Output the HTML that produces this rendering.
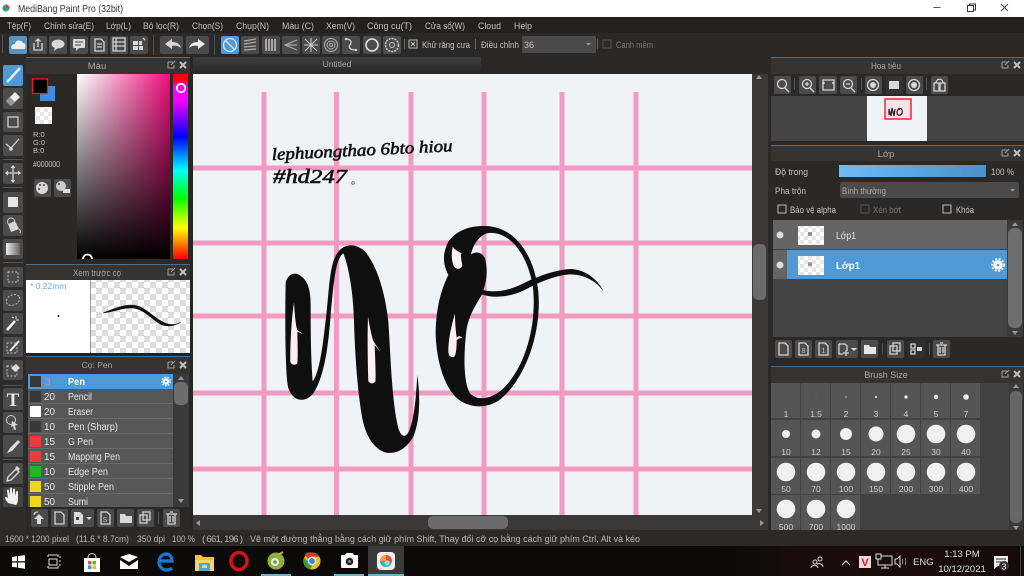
<!DOCTYPE html>
<html><head><meta charset="utf-8"><title>MediBang Paint Pro</title>
<style>
html,body{margin:0;padding:0;width:1024px;height:576px;overflow:hidden;background:#222}
svg{display:block;filter:blur(.35px)}
text{font-family:"Liberation Sans","DejaVu Sans",sans-serif;font-size:9.5px;fill:#c2c2c2}
.b{fill:#4b4b4b}
.i{fill:none;stroke:#d4d4d4;stroke-width:1.3}
.f{fill:#d8d8d8}
.c{text-anchor:middle}
.h{fill:#a8a8a8}
.n{font-size:8.5px;fill:#cfcfcf;text-anchor:middle}
.l{font-size:10px;fill:#e6e6e6}
</style></head><body>
<svg width="1024" height="576" viewBox="0 0 1024 576" xmlns="http://www.w3.org/2000/svg">
<defs>
<linearGradient id="hg" x1="0" x2="1" y1="0" y2="0"><stop offset="0" stop-color="#fff"/><stop offset="1" stop-color="#ee0f7c"/></linearGradient>
<linearGradient id="vg" x1="0" x2="0" y1="0" y2="1"><stop offset="0" stop-color="#000" stop-opacity="0"/><stop offset="1" stop-color="#000"/></linearGradient>
<linearGradient id="hue" x1="0" x2="0" y1="0" y2="1"><stop offset="0" stop-color="#f00"/><stop offset=".03" stop-color="#f00"/><stop offset=".07" stop-color="#f0f"/><stop offset=".15" stop-color="#e0f"/><stop offset=".34" stop-color="#00f"/><stop offset=".52" stop-color="#0ff"/><stop offset=".67" stop-color="#0f0"/><stop offset=".83" stop-color="#ff0"/><stop offset="1" stop-color="#f00"/></linearGradient>
<linearGradient id="op" x1="0" x2="1" y1="0" y2="0"><stop offset="0" stop-color="#6fbcf5"/><stop offset="1" stop-color="#4a90c6"/></linearGradient>
<linearGradient id="tab" x1="0" x2="0" y1="0" y2="1"><stop offset="0" stop-color="#3e3e3e"/><stop offset="1" stop-color="#2a2a2a"/></linearGradient>
<linearGradient id="gr" x1="0" x2="1" y1="0" y2="0"><stop offset="0" stop-color="#eee"/><stop offset="1" stop-color="#666"/></linearGradient>
<linearGradient id="tb" x1="0" x2="1" y1="0" y2="0"><stop offset="0" stop-color="#0b0a09"/><stop offset=".7" stop-color="#0c0a09"/><stop offset=".8" stop-color="#1d0c0c"/><stop offset="1" stop-color="#150b0b"/></linearGradient>
<pattern id="ck" width="8" height="8" patternUnits="userSpaceOnUse"><rect width="8" height="8" fill="#fff"/><rect width="4" height="4" fill="#e6e6e6"/><rect x="4" y="4" width="4" height="4" fill="#e6e6e6"/></pattern>
<pattern id="ck2" width="12" height="12" patternUnits="userSpaceOnUse"><rect width="12" height="12" fill="#fff"/><rect width="6" height="6" fill="#ddd"/><rect x="6" y="6" width="6" height="6" fill="#ddd"/></pattern>
</defs>

<!-- base -->
<rect width="1024" height="576" fill="#262626"/>
<rect width="1024" height="17" fill="#fff"/>
<!-- title bar -->
<circle cx="6" cy="8" r="3.5" fill="#3aa36f"/><path d="M6 4.5a3.5 3.5 0 0 1 3.5 3.5H6z" fill="#e34"/><path d="M2.5 8A3.5 3.5 0 0 0 6 11.500V8z" fill="#38c"/>
<text x="18" y="12" style="font-size:10.500px;fill:#333" textLength="105" lengthAdjust="spacingAndGlyphs">MediBang Paint Pro (32bit)</text>
<path d="M933.500 7.500h7" stroke="#555" stroke-width="1"/>
<path d="M967.500 5.500h6v6h-6zM969.500 5.500v-1.500h6v6h-2" fill="none" stroke="#333" stroke-width="1"/>
<path d="M1001 4l7 7M1008 4l-7 7" stroke="#444" stroke-width="1"/>

<!-- menu bar -->
<rect y="17" width="1024" height="16" fill="#232120"/>
<g>
<text x="7" y="29" textLength="24" lengthAdjust="spacingAndGlyphs">Tệp(F)</text>
<text x="44" y="29" textLength="50" lengthAdjust="spacingAndGlyphs">Chỉnh sửa(E)</text>
<text x="106" y="29" textLength="25" lengthAdjust="spacingAndGlyphs">Lớp(L)</text>
<text x="143" y="29" textLength="36" lengthAdjust="spacingAndGlyphs">Bộ lọc(R)</text>
<text x="192" y="29" textLength="31" lengthAdjust="spacingAndGlyphs">Chọn(S)</text>
<text x="236" y="29" textLength="33" lengthAdjust="spacingAndGlyphs">Chụp(N)</text>
<text x="282" y="29" textLength="32" lengthAdjust="spacingAndGlyphs">Màu (C)</text>
<text x="326" y="29" textLength="29" lengthAdjust="spacingAndGlyphs">Xem(V)</text>
<text x="367" y="29" textLength="45" lengthAdjust="spacingAndGlyphs">Công cụ(T)</text>
<text x="425" y="29" textLength="40" lengthAdjust="spacingAndGlyphs">Cửa sổ(W)</text>
<text x="478" y="29" textLength="23" lengthAdjust="spacingAndGlyphs">Cloud</text>
<text x="514" y="29" textLength="18" lengthAdjust="spacingAndGlyphs">Help</text>
</g>

<!-- tool bar -->
<rect y="33" width="1024" height="22" fill="#2a2928"/>
<rect x="2" y="35" width="1" height="18" fill="#555"/>
<rect x="153" y="35" width="1" height="20" fill="#3c5566"/>
<rect x="214" y="35" width="1" height="20" fill="#3c5566"/>
<g>
<rect x="9" y="36" width="18" height="18" rx="2" fill="#5a93bf"/><path d="M12 49c-2-3 1-5 3-5 0-4 6-5 8-1 2 0 3 2 2 6z" fill="#eee"/>
<rect x="29" y="36" width="18" height="18" rx="2" class="b"/><path d="M34 43v7h8v-7M38 47v-8m-2.500 2.500l2.500-2.500 2.500 2.500" class="i"/>
<rect x="49" y="36" width="18" height="18" rx="2" class="b"/><ellipse cx="58" cy="44" rx="6.500" ry="4.500" class="f"/><path d="M55 47l-1 4 4-3z" class="f"/>
<rect x="70" y="36" width="18" height="18" rx="2" class="b"/><rect x="73" y="39" width="12" height="9" rx="1" class="f"/><path d="M76 48v3l3-3z" class="f"/><path d="M75 42h8M75 45h6" stroke="#4b4b4b"/>
<rect x="90" y="36" width="18" height="18" rx="2" class="b"/><path d="M95 39h6l3 3v9h-9zM97 44h5M97 47h5" class="i"/>
<rect x="110" y="36" width="18" height="18" rx="2" class="b"/><path d="M113 38h12v13h-12zM113 42h12M113 46h12M116 38v13" class="i"/>
<rect x="130" y="36" width="18" height="18" rx="2" class="b"/><path d="M133 41h5v4h-5zM139 41h3v4h-3zM133 46h5v4h-5zM139 46h4v4h-4z" class="f"/><path d="M143 38l2 2" class="i"/>
<rect x="160" y="36" width="23" height="18" rx="2" class="b"/><path d="M165 44l7-5v3c5 0 8 2 9 6-3-2-5-3-9-2v3z" class="f"/>
<rect x="186" y="36" width="23" height="18" rx="2" class="b"/><path d="M205 44l-7-5v3c-5 0-8 2-9 6 3-2 5-3 9-2v3z" fill="#eee"/>
<rect x="221" y="36" width="18" height="18" rx="2" fill="#4f9ad6"/><circle cx="230" cy="45" r="6.500" fill="none" stroke="#d7e9f6" stroke-width="1.300"/><path d="M225.500 40.500l9 9" stroke="#d7e9f6" stroke-width="1.300"/>
<rect x="241" y="36" width="18" height="18" rx="2" class="b"/><path d="M244 41l12-2M244 44l12-2M244 47l12-1M244 50l12-1" stroke="#aaa" stroke-width="1.200"/>
<rect x="262" y="36" width="18" height="18" rx="2" class="b"/><path d="M266 39v12M269 39v12M272 39v12M275 39v12" stroke="#ccc" stroke-width="1.400"/>
<rect x="282" y="36" width="18" height="18" rx="2" class="b"/><path d="M297 40l-12 5 12 5M297 45h-12" stroke="#aaa" stroke-width="1.200" fill="none"/>
<rect x="302" y="36" width="18" height="18" rx="2" class="b"/><path d="M305 39l12 12M317 39l-12 12M311 38v14M304 45h14" stroke="#ccc"/>
<rect x="322" y="36" width="18" height="18" rx="2" class="b"/><circle cx="331" cy="45" r="6.500" fill="none" stroke="#aaa"/><circle cx="331" cy="45" r="4" fill="none" stroke="#aaa"/><circle cx="331" cy="45" r="1.500" fill="none" stroke="#aaa"/>
<rect x="342" y="36" width="18" height="18" rx="2" class="b"/><path d="M346 39c5 0 6 3 4 6s1 5 6 5" class="i"/><circle cx="346" cy="39" r="1.200" class="f"/><circle cx="356" cy="50" r="1.200" class="f"/>
<rect x="363" y="36" width="18" height="18" rx="2" class="b"/><circle cx="372" cy="45" r="6" fill="none" stroke="#e0e0e0" stroke-width="1.600"/>
<rect x="383" y="36" width="18" height="18" rx="2" class="b"/><circle cx="392" cy="45" r="6.500" fill="none" stroke="#ccc" stroke-dasharray="2 1" stroke-width="1.500"/><circle cx="392" cy="45" r="2.500" fill="none" stroke="#ccc"/>
</g>
<rect x="404" y="39" width="1" height="10" fill="#666"/>
<rect x="409" y="40" width="8" height="8" fill="none" stroke="#bbb"/><path d="M411 42l4 4M415 42l-4 4" stroke="#ccc"/>
<text x="422" y="48" textLength="48" lengthAdjust="spacingAndGlyphs">Khử răng cưa</text>
<rect x="475" y="39" width="1" height="10" fill="#666"/>
<text x="481" y="48" textLength="38" lengthAdjust="spacingAndGlyphs">Điều chỉnh</text>
<rect x="522" y="36" width="74" height="17" rx="1" fill="#4a4a4a"/>
<text x="524" y="48" style="font-size:9px">36</text>
<path d="M586 43h5l-2.500 2.500z" fill="#999"/>
<rect x="597" y="39" width="1" height="10" fill="#666"/>
<rect x="603" y="40" width="8" height="8" fill="none" stroke="#555"/>
<text x="616" y="48" style="fill:#777" textLength="37" lengthAdjust="spacingAndGlyphs">Canh mềm</text>

<!-- tab row -->
<rect x="193" y="55" width="578" height="19" fill="#2a2928"/>
<rect x="193" y="57" width="288" height="14" rx="1" fill="url(#tab)"/>
<text x="337" y="67" class="c h" style="font-size:8.500px">Untitled</text>

<!-- left toolbar -->
<rect x="0" y="55" width="26" height="475" fill="#2d2c2b"/>
<g>
<rect x="3" y="65" width="20" height="21" rx="2" fill="#4f9ad6"/><path d="M7 82l3-3 10-11" stroke="#eee" stroke-width="2.500" fill="none"/>
<rect x="3" y="88" width="20" height="21" rx="2" class="b"/><path d="M6 101l9-9 5 5-9 9z" fill="#eee"/><path d="M6 101l4-4 5 5-4 4z" fill="#999"/>
<rect x="3" y="112" width="20" height="20" rx="2" class="b"/><rect x="8" y="117" width="10" height="10" fill="none" stroke="#ccc" stroke-width="1.300"/>
<rect x="3" y="135" width="20" height="21" rx="2" class="b"/><path d="M6 144l5 4 8-9" class="i" stroke-width="2"/><circle cx="11" cy="149" r="1.800" class="f"/>
<rect x="3" y="159" width="20" height="1" fill="#555"/>
<rect x="3" y="163" width="20" height="21" rx="2" class="b"/><path d="M13 166v15M6 173h14" class="i"/><path d="M13 165l-2.500 3h5zM13 183l-2.500-3h5zM5 173l3-2.500v5zM21 173l-3-2.500v5z" class="f"/>
<rect x="3" y="187" width="20" height="1" fill="#555"/>
<rect x="3" y="192" width="20" height="21" rx="2" class="b"/><rect x="8" y="197" width="10" height="10" fill="#e8e8e8"/>
<rect x="3" y="215" width="20" height="21" rx="2" class="b"/><path d="M8 224l7-3 4 8-8 3z" class="f"/><path d="M8 224c-1-3 0-6 3-6s3 2 4 3" fill="none" stroke="#ccc"/><path d="M19 229c1 1 2 2 1 4" stroke="#ccc" fill="none"/>
<rect x="3" y="239" width="20" height="20" rx="2" class="b"/><rect x="6" y="243" width="14" height="12" fill="url(#gr)"/>
<rect x="3" y="262" width="20" height="1" fill="#555"/>
<rect x="3" y="267" width="20" height="20" rx="2" class="b"/><rect x="8" y="272" width="10" height="10" fill="none" stroke="#bbb" stroke-dasharray="2 1.500"/>
<rect x="3" y="290" width="20" height="21" rx="2" class="b"/><ellipse cx="13" cy="300" rx="7" ry="5" transform="rotate(-25 13 300)" fill="none" stroke="#bbb" stroke-dasharray="2 1.500"/>
<rect x="3" y="313" width="20" height="21" rx="2" class="b"/><path d="M7 330l8-9" stroke="#eee" stroke-width="2.500"/><path d="M16 316v3M19 320h-3M14 318l-2-1" stroke="#ddd"/>
<rect x="3" y="337" width="20" height="20" rx="2" class="b"/><rect x="7" y="343" width="10" height="10" fill="none" stroke="#bbb" stroke-dasharray="2 1.500"/><path d="M10 351l9-10" stroke="#eee" stroke-width="2"/>
<rect x="3" y="360" width="20" height="20" rx="2" class="b"/><rect x="7" y="366" width="10" height="10" fill="none" stroke="#bbb" stroke-dasharray="2 1.500"/><path d="M11 368l5-4 4 4-5 4z" fill="#ddd"/>
<rect x="3" y="385" width="20" height="1" fill="#555"/>
<rect x="3" y="388" width="20" height="22" rx="2" class="b"/><text x="13" y="406" class="c" style="font-family:'Liberation Serif',serif;font-size:19px;font-weight:bold;fill:#e8e8e8">T</text>
<rect x="3" y="412" width="20" height="21" rx="2" class="b"/><circle cx="11" cy="420" r="4.500" fill="none" stroke="#ccc"/><path d="M12 421l6 4-3 .5 1 4-2 .5-1-4-2 1z" class="f"/>
<rect x="3" y="435" width="20" height="22" rx="2" class="b"/><path d="M7 453l3-5 8-8 2 2-8 9z" fill="#ddd"/>
<rect x="3" y="459" width="20" height="1" fill="#555"/>
<rect x="3" y="463" width="20" height="21" rx="2" class="b"/><path d="M7 481l1-4 8-8 3 3-8 8z" fill="none" stroke="#ddd" stroke-width="1.300"/><path d="M15 468l2-2 3 3-2 2z" class="f"/>
<rect x="3" y="487" width="20" height="20" rx="2" fill="#444"/><path d="M8 503c-2-3-4-5-3-6s3 1 3 1l-1-7c0-2 2-2 2 0l1 4 0-6c0-2 2-2 2 0v6l1-5c0-2 2-2 2 0v6l1-4c1-2 2-1 2 0v7c0 3-1 5-2 6z" fill="#f0f0f0"/>
</g>

<!-- colour panel -->
<rect x="26" y="57" width="164" height="17" fill="#353433"/>
<rect x="26" y="57" width="164" height="1" fill="#4a6f8c"/>
<rect x="26" y="74" width="164" height="190" fill="#2a2928"/>
<text x="97" y="69" class="c h">Màu</text>
<path d="M168 62h5M168 62v6h6v-3M171 65l4-4" fill="none" stroke="#a0a0a0"/>
<path d="M180 62l6 6M186 62l-6 6" stroke="#c0c0c0" stroke-width="2"/>
<rect x="77" y="74" width="93" height="185" fill="url(#hg)"/>
<rect x="77" y="74" width="93" height="185" fill="url(#vg)"/>
<rect x="173" y="74" width="15" height="185" fill="url(#hue)"/>
<circle cx="181" cy="88" r="4.200" fill="none" stroke="#fff" stroke-width="1.800"/>
<path d="M83 259a4.500 4.500 0 0 1 9 0" fill="none" stroke="#fff" stroke-width="1.800"/>
<rect x="40" y="86" width="15" height="15" fill="#3d8ee0"/>
<rect x="32.500" y="79" width="15" height="14.500" fill="#000" stroke="#e02020" stroke-width="1.300"/>
<rect x="35" y="107" width="17" height="17" fill="url(#ck)"/>
<text x="33" y="137" style="font-size:7.500px">R:0</text>
<text x="33" y="145" style="font-size:7.500px">G:0</text>
<text x="33" y="153" style="font-size:7.500px">B:0</text>
<text x="33" y="167" style="font-size:8px" textLength="27" lengthAdjust="spacingAndGlyphs">#000000</text>
<rect x="34" y="179" width="17" height="18" rx="2" class="b"/><circle cx="42" cy="188" r="6" class="f"/><circle cx="40" cy="185" r="1" fill="#444"/><circle cx="44" cy="185" r="1" fill="#444"/><circle cx="39" cy="189" r="1" fill="#444"/>
<rect x="54" y="179" width="17" height="18" rx="2" class="b"/><circle cx="61" cy="186" r="5" fill="#ccc"/><circle cx="59" cy="184" r="1" fill="#444"/><rect x="63" y="189" width="7" height="4" fill="#ddd"/>

<!-- brush preview panel -->
<rect x="26" y="264" width="164" height="16" fill="#353433"/>
<rect x="26" y="264" width="164" height="1" fill="#4a6f8c"/>
<text x="73" y="276" class="h" textLength="48" lengthAdjust="spacingAndGlyphs">Xem trước cọ</text>
<path d="M168 269h5M168 269v6h6v-3M171 272l4-4" fill="none" stroke="#a0a0a0"/>
<path d="M180 269l6 6M186 269l-6 6" stroke="#c0c0c0" stroke-width="2"/>
<rect x="26" y="280" width="64" height="73" fill="#fff"/>
<rect x="90" y="280" width="1" height="73" fill="#999"/>
<rect x="91" y="280" width="99" height="73" fill="url(#ck2)"/>
<rect x="26" y="353" width="164" height="4" fill="#222"/>
<text x="30" y="289" style="font-size:8.500px;fill:#6fa8d8">* 0.22mm</text>
<circle cx="58.500" cy="316" r="1" fill="#222"/>
<path d="M103 313c10-4 20-8 28-8 12 0 20 10 30 16 8 5 16 4 20 1-4 3-13 6-21 2-10-6-17-16-29-16-9 0-18 4-28 5z" fill="#111" stroke="#111" stroke-width=".5"/>

<!-- brush panel -->
<rect x="26" y="357" width="164" height="173" fill="#2a2928"/>
<rect x="26" y="357" width="164" height="17" fill="#353433"/>
<rect x="26" y="356" width="164" height="1" fill="#4a6f8c"/>
<text x="97" y="368" class="c h" style="font-size:8.500px">Cọ: Pen</text>
<path d="M168 362h5M168 362v6h6v-3M171 365l4-4" fill="none" stroke="#a0a0a0"/>
<path d="M180 362l6 6M186 362l-6 6" stroke="#c0c0c0" stroke-width="2"/>
<rect x="28" y="374" width="145" height="133" fill="#575757"/>
<rect x="28" y="374" width="145" height="15" fill="#4f9ad6"/>
<g fill="#6a6a6a"><rect x="28" y="403" width="145" height="1"/><rect x="28" y="418" width="145" height="1"/><rect x="28" y="433" width="145" height="1"/><rect x="28" y="448" width="145" height="1"/><rect x="28" y="463" width="145" height="1"/><rect x="28" y="478" width="145" height="1"/><rect x="28" y="493" width="145" height="1"/></g>
<rect x="30" y="376" width="11" height="11" fill="#383838"/>
<rect x="30" y="391" width="11" height="11" fill="#383838"/>
<rect x="30" y="406" width="11" height="11" fill="#fff"/>
<rect x="30" y="421" width="11" height="11" fill="#383838"/>
<rect x="30" y="436" width="11" height="11" fill="#ee3a3a"/>
<rect x="30" y="451" width="11" height="11" fill="#ee3a3a"/>
<rect x="30" y="466" width="11" height="11" fill="#1cb81c"/>
<rect x="30" y="481" width="11" height="11" fill="#ecd81e"/>
<rect x="30" y="496" width="11" height="11" fill="#ecd81e"/>
<text x="45" y="385" style="fill:#f27a9a;font-size:10px">3</text>
<text x="68" y="385" style="fill:#fff;font-size:10px;font-weight:bold" textLength="17" lengthAdjust="spacingAndGlyphs">Pen</text>
<text x="44" y="400" class="l" textLength="11" lengthAdjust="spacingAndGlyphs">20</text><text x="68" y="400" class="l" textLength="24" lengthAdjust="spacingAndGlyphs">Pencil</text>
<text x="44" y="415" class="l" textLength="11" lengthAdjust="spacingAndGlyphs">20</text><text x="68" y="415" class="l" textLength="25" lengthAdjust="spacingAndGlyphs">Eraser</text>
<text x="44" y="430" class="l" textLength="11" lengthAdjust="spacingAndGlyphs">10</text><text x="68" y="430" class="l" textLength="50" lengthAdjust="spacingAndGlyphs">Pen (Sharp)</text>
<text x="44" y="445" class="l" textLength="11" lengthAdjust="spacingAndGlyphs">15</text><text x="68" y="445" class="l" textLength="25" lengthAdjust="spacingAndGlyphs">G Pen</text>
<text x="44" y="460" class="l" textLength="11" lengthAdjust="spacingAndGlyphs">15</text><text x="68" y="460" class="l" textLength="52" lengthAdjust="spacingAndGlyphs">Mapping Pen</text>
<text x="44" y="475" class="l" textLength="11" lengthAdjust="spacingAndGlyphs">10</text><text x="68" y="475" class="l" textLength="40" lengthAdjust="spacingAndGlyphs">Edge Pen</text>
<text x="44" y="490" class="l" textLength="11" lengthAdjust="spacingAndGlyphs">50</text><text x="68" y="490" class="l" textLength="46" lengthAdjust="spacingAndGlyphs">Stipple Pen</text>
<text x="44" y="505" class="l" textLength="11" lengthAdjust="spacingAndGlyphs">50</text><text x="68" y="505" class="l" textLength="20" lengthAdjust="spacingAndGlyphs">Sumi</text>
<circle cx="166" cy="381.500" r="3.200" fill="#fff"/><circle cx="166" cy="381.500" r="4.200" fill="none" stroke="#fff" stroke-dasharray="1.500 1.500" stroke-width="1.400"/><circle cx="166" cy="381.500" r="1" fill="#4f9ad6"/>
<rect x="173" y="374" width="16" height="133" fill="#3a3a3a"/>
<rect x="174" y="382" width="14" height="23" rx="5" fill="#6d6d6d"/>
<path d="M178 380l3-4 3 4zM178 499l3 4 3-4z" fill="#999"/>
<rect x="26" y="507" width="164" height="23" fill="#2a2928"/>
<g>
<rect x="31" y="509" width="17" height="18" rx="2" class="b"/><path d="M39 514l-5 5h3v5h4v-5h3z" class="f"/><path d="M34 515c0-3 3-3 4-3" class="i"/>
<rect x="51" y="509" width="17" height="18" rx="2" class="b"/><path d="M55 512h6l3 3v9h-9z" class="i"/>
<rect x="71" y="509" width="23" height="18" rx="2" class="b"/><path d="M74 512h6l3 3v9h-9z" fill="#ddd"/><rect x="76" y="517" width="3" height="3" fill="#444"/><path d="M86 517h6l-3 3z" fill="#ddd"/>
<rect x="97" y="509" width="17" height="18" rx="2" class="b"/><path d="M101 512h6l3 3v9h-9z" class="i"/><text x="105" y="522" class="c" style="font-size:7px">S</text>
<rect x="117" y="509" width="17" height="18" rx="2" class="b"/><path d="M120 514h5l1 2h6v7h-12z" class="f"/>
<rect x="137" y="509" width="17" height="18" rx="2" class="b"/><path d="M143 512h7v8h-7zM140 515h7v8h-7z" class="i"/>
<rect x="158" y="512" width="1" height="12" fill="#555"/>
<rect x="163" y="509" width="17" height="18" rx="2" class="b"/><path d="M166 514h11M168 514v10h7v-10M170 512h3M170 516v6M173 516v6" class="i"/>
</g>

<!-- canvas -->
<rect x="193" y="74" width="559" height="441" fill="#eff3f5"/>
<g fill="#f29ac0">
<rect x="261.500" y="92" width="5" height="423"/>
<rect x="334" y="92" width="5" height="423"/>
<rect x="408.500" y="92" width="5" height="423"/>
<rect x="481.500" y="92" width="5" height="423"/>
<rect x="559.500" y="92" width="5" height="423"/>
<rect x="633.500" y="92" width="5" height="423"/>
<rect x="193" y="165.500" width="559" height="5"/>
<rect x="193" y="240.500" width="559" height="5"/>
<rect x="193" y="313.500" width="559" height="5"/>
<rect x="193" y="390.500" width="559" height="5"/>
<rect x="193" y="466.500" width="559" height="5"/>
</g>
<!-- handwriting -->
<g transform="rotate(-2.800 272 160)">
<text x="272" y="160" style="font-family:'Liberation Serif',serif;font-style:italic;font-size:17px;fill:#111;stroke:#111;stroke-width:.6" textLength="181" lengthAdjust="spacingAndGlyphs">lephuongthao 6bto hiou</text>
</g>
<text x="273" y="183" style="font-family:'Liberation Serif',serif;font-style:italic;font-size:20px;fill:#111;stroke:#111;stroke-width:.6" textLength="74" lengthAdjust="spacingAndGlyphs">#hd247</text>
<circle cx="353" cy="183" r="1.300" fill="none" stroke="#666" stroke-width=".8"/>
<!-- big drawing -->
<g transform="translate(270 215) scale(.33333)">
<path fill="#0f0f0f" d="M47 205C50 180 75 165 95 185C115 200 122 230 122 270C122 340 122 420 128 500C150 470 160 380 170 290C178 210 180 140 205 110C225 85 260 85 285 110C320 150 345 230 355 320C362 420 365 560 385 640C395 670 410 670 420 640C435 600 438 540 442 480C450 540 452 610 430 665C410 700 380 720 345 712C310 700 285 660 275 600C262 520 255 420 252 320C250 230 235 150 220 115C195 130 190 220 182 300C175 390 165 480 130 535C105 565 70 560 55 520C45 480 45 300 47 205Z"/>
<path fill="#fdf0f4" d="M72 262C75 310 78 335 82 345L100 358L82 350C83 390 84 430 82 445C75 452 64 450 61 440C60 380 66 300 72 262Z"/>
<path fill="#fdf0f4" d="M294 305C300 340 305 365 310 378L332 412L314 390C316 440 318 490 316 500C310 508 298 506 295 498C293 440 292 360 294 305Z"/>
<path fill="#0f0f0f" fill-rule="evenodd" d="M640 33C720 30 790 100 805 230C815 350 770 480 700 545C670 575 620 585 575 560C530 535 500 450 497 360C497 290 510 230 535 180C520 150 515 120 535 80C560 45 600 33 640 33ZM650 55C630 62 610 85 603 118C620 108 635 112 645 130C655 170 650 200 635 240C615 275 600 295 590 340C580 420 580 500 600 535C630 565 680 545 710 510C780 430 800 300 788 210C765 90 700 45 650 55Z"/>
<path fill="#0f0f0f" d="M640 225C680 235 720 225 760 205C810 180 860 165 900 162C945 162 985 195 1000 228C975 195 940 178 900 178C860 180 810 200 770 222C720 248 670 250 635 238Z"/>
<path fill="#fdf0f4" d="M548 95C555 105 565 110 575 115C570 118 575 140 577 150C575 165 555 165 550 150C543 130 545 110 548 95Z"/>
<path fill="#fdf0f4" d="M555 295C555 330 558 350 560 368C565 362 572 362 578 370C570 368 563 372 560 376C560 400 558 420 552 426C540 428 535 420 535 410C535 370 545 330 555 295Z"/>
</g>
<!-- canvas scrollbars -->
<rect x="752" y="74" width="16" height="441" fill="#3a3938"/>
<rect x="753" y="244" width="13" height="56" rx="5" fill="#6b6b6b"/>
<path d="M756 79l3-4 3 4zM756 509l3 4 3-4z" fill="#999"/>
<rect x="193" y="515" width="575" height="15" fill="#3a3938"/>
<rect x="428" y="516" width="80" height="13" rx="5" fill="#6b6b6b"/>
<path d="M200 520l-4 3 4 3zM760 520l4 3-4 3z" fill="#999"/>
<rect x="768" y="55" width="3" height="475" fill="#2a2928"/>
<rect x="190" y="55" width="3" height="475" fill="#262625"/>

<!-- right: navigator -->
<rect x="771" y="57" width="253" height="88" fill="#2a2928"/>
<rect x="771" y="57" width="253" height="17" fill="#353433"/>
<rect x="771" y="57" width="253" height="1" fill="#4a6f8c"/>
<text x="871" y="69" class="h" textLength="30" lengthAdjust="spacingAndGlyphs">Hoa tiêu</text>
<path d="M1002 62h5M1002 62v6h6v-3M1005 65l4-4" fill="none" stroke="#a0a0a0"/>
<path d="M1014 62l6 6M1020 62l-6 6" stroke="#c0c0c0" stroke-width="2"/>
<g>
<rect x="774" y="76" width="17" height="18" rx="2" class="b"/><circle cx="782" cy="84" r="4.500" class="i"/><path d="M785 88l4 4" class="i"/>
<rect x="799" y="76" width="17" height="18" rx="2" class="b"/><circle cx="807" cy="84" r="4.500" class="i"/><path d="M810 88l4 4M805 84h4M807 82v4" class="i"/>
<rect x="819" y="76" width="18" height="18" rx="2" class="b"/><path d="M823 80h11v10h-11zM824 82v2M833 82v2" class="i"/>
<rect x="840" y="76" width="17" height="18" rx="2" class="b"/><circle cx="848" cy="84" r="4.500" class="i"/><path d="M851 88l4 4M846 84h4" class="i"/>
<rect x="865" y="76" width="17" height="18" rx="2" class="b"/><circle cx="873" cy="85" r="5.500" class="i"/><circle cx="873" cy="85" r="3" class="f"/>
<rect x="886" y="76" width="17" height="18" rx="2" fill="#333"/><rect x="889" y="81" width="10" height="8" class="f"/>
<rect x="906" y="76" width="17" height="18" rx="2" class="b"/><circle cx="914" cy="85" r="5.500" class="i"/><circle cx="914" cy="85" r="3" class="f"/>
<rect x="931" y="76" width="17" height="18" rx="2" class="b"/><path d="M934 83h5v8h-5zM940 83h5v8h-5zM936 83c0-5 7-5 7 0" class="i"/>
<rect x="794" y="78" width="1" height="12" fill="#555"/><rect x="861" y="78" width="1" height="12" fill="#555"/><rect x="926" y="78" width="1" height="12" fill="#555"/>
</g>
<rect x="771" y="96" width="253" height="45" fill="#444"/>
<rect x="867" y="96" width="60" height="45" fill="#f0f3f5"/>
<rect x="885" y="99" width="26" height="20" fill="#f6e0ea" stroke="#e01010" stroke-width="1.300"/>
<path d="M889 115v-6l2 7 1-8 2 8 1-7M898 109c3-2 5 1 4 4s-5 3-5 0 1-4 3-4" fill="none" stroke="#222" stroke-width="1.200"/>

<!-- right: layers -->
<rect x="771" y="145" width="253" height="220" fill="#2a2928"/>
<rect x="771" y="145" width="253" height="16" fill="#353433"/>
<rect x="771" y="145" width="253" height="1" fill="#4a6f8c"/>
<text x="886" y="157" class="c h">Lớp</text>
<path d="M1002 150h5M1002 150v6h6v-3M1005 153l4-4" fill="none" stroke="#a0a0a0"/>
<path d="M1014 150l6 6M1020 150l-6 6" stroke="#c0c0c0" stroke-width="2"/>
<text x="775" y="175" textLength="33" lengthAdjust="spacingAndGlyphs">Độ trong</text>
<rect x="839" y="165" width="147" height="12" fill="url(#op)"/>
<text x="991" y="175" textLength="23" lengthAdjust="spacingAndGlyphs">100 %</text>
<text x="775" y="194" textLength="31" lengthAdjust="spacingAndGlyphs">Pha trộn</text>
<rect x="840" y="182" width="179" height="16" rx="2" fill="#4a4a4a"/>
<text x="842" y="194" style="fill:#aaa" textLength="44" lengthAdjust="spacingAndGlyphs">Bình thường</text>
<path d="M1010 189h5l-2.500 2.500z" fill="#999"/>
<rect x="778" y="205" width="8" height="8" fill="none" stroke="#bbb"/>
<text x="790" y="213" textLength="46" lengthAdjust="spacingAndGlyphs">Bảo vệ alpha</text>
<rect x="861" y="205" width="8" height="8" fill="none" stroke="#555"/>
<text x="873" y="213" style="fill:#777" textLength="28" lengthAdjust="spacingAndGlyphs">Xén bớt</text>
<rect x="943" y="205" width="8" height="8" fill="none" stroke="#bbb"/>
<text x="956" y="213" textLength="18" lengthAdjust="spacingAndGlyphs">Khóa</text>
<rect x="773" y="220" width="234" height="117" fill="#444"/>
<rect x="773" y="220" width="234" height="29" fill="#646464"/>
<rect x="773" y="250" width="14" height="29" fill="#646464"/>
<rect x="787" y="250" width="220" height="29" fill="#4f9ad6"/>
<circle cx="780" cy="235" r="3.500" fill="#ddd"/><circle cx="780" cy="265" r="3.500" fill="#ddd"/>
<rect x="798" y="226" width="26" height="19" fill="url(#ck)"/>
<rect x="798" y="256" width="26" height="19" fill="url(#ck)"/>
<path d="M808 236l1-4 1 4 1-4 1 4" fill="none" stroke="#555" stroke-width=".6"/>
<path d="M808 266l1-4 1 4 1-4 1 4" fill="none" stroke="#745" stroke-width=".6"/>
<text x="836" y="239" style="font-size:10px;fill:#e4e4e4" textLength="20" lengthAdjust="spacingAndGlyphs">Lớp1</text>
<text x="836" y="269" style="font-size:10px;fill:#fff;font-weight:bold" textLength="24" lengthAdjust="spacingAndGlyphs">Lớp1</text>
<circle cx="998" cy="265" r="4.800" fill="#fff"/><circle cx="998" cy="265" r="6" fill="none" stroke="#fff" stroke-dasharray="2 1.600" stroke-width="1.800"/><circle cx="998" cy="265" r="1.300" fill="#4f9ad6"/>
<rect x="1007" y="220" width="16" height="117" fill="#3a3a3a"/>
<rect x="1008" y="228" width="14" height="100" rx="6" fill="#6e6e6e"/>
<path d="M1012 226l3-4 3 4zM1012 331l3 4 3-4z" fill="#999"/>
<g>
<rect x="775" y="340" width="17" height="18" rx="2" class="b"/><path d="M779 343h6l3 3v9h-9z" class="i"/>
<rect x="795" y="340" width="17" height="18" rx="2" class="b"/><path d="M799 343h6l3 3v9h-9z" class="i"/><text x="803.500" y="353" class="c" style="font-size:7px">8</text>
<rect x="815" y="340" width="17" height="18" rx="2" class="b"/><path d="M819 343h6l3 3v9h-9z" class="i"/><text x="823.500" y="353" class="c" style="font-size:7px">1</text>
<rect x="836" y="340" width="22" height="18" rx="2" class="b"/><path d="M839 344h6l2 2v5M839 344v10h4M846 350v6M843 353h6" class="i"/><path d="M851 348h6l-3 3z" fill="#ddd"/>
<rect x="861" y="340" width="17" height="18" rx="2" class="b"/><path d="M864 345h5l1 2h6v7h-12z" fill="#e6e6e6"/>
<rect x="882" y="343" width="1" height="12" fill="#555"/>
<rect x="887" y="340" width="17" height="18" rx="2" class="b"/><path d="M893 343h7v8h-7zM890 346h7v8h-7z" class="i"/>
<rect x="908" y="340" width="17" height="18" rx="2" fill="#2f2f2f"/><path d="M911 344h4v4h-4zM911 350h4v4h-4z" class="i"/><rect x="917" y="347" width="5" height="4" class="f"/>
<rect x="929" y="343" width="1" height="12" fill="#555"/>
<rect x="933" y="340" width="17" height="18" rx="2" class="b"/><path d="M936 345h11M938 345v10h7v-10M940 343h3M940 347v6M943 347v6" class="i"/>
</g>

<!-- right: brush size -->
<rect x="771" y="365" width="253" height="165" fill="#2a2928"/>
<rect x="771" y="366" width="253" height="1" fill="#4a6f8c"/>
<rect x="771" y="367" width="253" height="16" fill="#353433"/>
<text x="886" y="378" class="c h" style="font-size:9px">Brush Size</text>
<path d="M1002 371h5M1002 371v6h6v-3M1005 374l4-4" fill="none" stroke="#a0a0a0"/>
<path d="M1014 371l6 6M1020 371l-6 6" stroke="#c0c0c0" stroke-width="2"/>
<rect x="771" y="383" width="239" height="148" fill="#424242"/>
<g fill="#555">
<rect x="771" y="383" width="29" height="35"/><rect x="801" y="383" width="29" height="35"/><rect x="831" y="383" width="29" height="35"/><rect x="861" y="383" width="29" height="35"/><rect x="891" y="383" width="29" height="35"/><rect x="921" y="383" width="29" height="35"/><rect x="951" y="383" width="29" height="35"/>
<rect x="771" y="420" width="29" height="36"/><rect x="801" y="420" width="29" height="36"/><rect x="831" y="420" width="29" height="36"/><rect x="861" y="420" width="29" height="36"/><rect x="891" y="420" width="29" height="36"/><rect x="921" y="420" width="29" height="36"/><rect x="951" y="420" width="29" height="36"/>
<rect x="771" y="458" width="29" height="36"/><rect x="801" y="458" width="29" height="36"/><rect x="831" y="458" width="29" height="36"/><rect x="861" y="458" width="29" height="36"/><rect x="891" y="458" width="29" height="36"/><rect x="921" y="458" width="29" height="36"/><rect x="951" y="458" width="29" height="36"/>
<rect x="771" y="495" width="29" height="36"/><rect x="801" y="495" width="29" height="36"/><rect x="831" y="495" width="29" height="36"/>
</g>
<g fill="#f0f0f0">
<circle cx="816" cy="397" r=".4" fill="#999"/><circle cx="846" cy="397" r=".6"/><circle cx="876" cy="397" r="1"/><circle cx="906" cy="397" r="1.600"/><circle cx="936" cy="397" r="2.200"/><circle cx="966" cy="397" r="2.800"/>
<circle cx="786" cy="434" r="4"/><circle cx="816" cy="434" r="4.500"/><circle cx="846" cy="434" r="6"/><circle cx="876" cy="434" r="7.500"/><circle cx="906" cy="434" r="9.300"/><circle cx="936" cy="434" r="9.300"/><circle cx="966" cy="434" r="9.300"/>
<circle cx="786" cy="472" r="9.300"/><circle cx="816" cy="472" r="9.300"/><circle cx="846" cy="472" r="9.300"/><circle cx="876" cy="472" r="9.300"/><circle cx="906" cy="472" r="9.300"/><circle cx="936" cy="472" r="9.300"/><circle cx="966" cy="472" r="9.300"/>
<circle cx="786" cy="509" r="9.300"/><circle cx="816" cy="509" r="9.300"/><circle cx="846" cy="509" r="9.300"/>
</g>
<text x="786" y="417" class="n">1</text><text x="816" y="417" class="n">1.5</text><text x="846" y="417" class="n">2</text><text x="876" y="417" class="n">3</text><text x="906" y="417" class="n">4</text><text x="936" y="417" class="n">5</text><text x="966" y="417" class="n">7</text>
<text x="786" y="455" class="n">10</text><text x="816" y="455" class="n">12</text><text x="846" y="455" class="n">15</text><text x="876" y="455" class="n">20</text><text x="906" y="455" class="n">25</text><text x="936" y="455" class="n">30</text><text x="966" y="455" class="n">40</text>
<text x="786" y="492" class="n">50</text><text x="816" y="492" class="n">70</text><text x="846" y="492" class="n">100</text><text x="876" y="492" class="n">150</text><text x="906" y="492" class="n">200</text><text x="936" y="492" class="n">300</text><text x="966" y="492" class="n">400</text>
<text x="786" y="530" class="n">500</text><text x="816" y="530" class="n">700</text><text x="846" y="530" class="n">1000</text>
<rect x="1009" y="383" width="14" height="148" fill="#3a3a3a"/>
<rect x="1010" y="391" width="12" height="132" rx="5" fill="#666"/>
<path d="M1013 388l3-4 3 4zM1013 526l3 4 3-4z" fill="#999"/>

<!-- status bar -->
<rect y="530" width="1024" height="16" fill="#2b2a29"/>
<g>
<text x="5" y="542" style="fill:#b8b8b8" textLength="64" lengthAdjust="spacingAndGlyphs">1600 * 1200 pixel</text>
<text x="76" y="542" style="fill:#b8b8b8" textLength="53" lengthAdjust="spacingAndGlyphs">(11.6 * 8.7cm)</text>
<text x="137" y="542" style="fill:#b8b8b8" textLength="28" lengthAdjust="spacingAndGlyphs">350 dpi</text>
<text x="172" y="542" style="fill:#b8b8b8" textLength="23" lengthAdjust="spacingAndGlyphs">100 %</text>
<text x="202" y="542" style="fill:#b8b8b8" textLength="41" lengthAdjust="spacing">( 661, 196 )</text>
<text x="250" y="542" style="fill:#b8b8b8" textLength="390" lengthAdjust="spacingAndGlyphs">Vẽ một đường thẳng bằng cách giữ phím Shift, Thay đổi cỡ cọ bằng cách giữ phím Ctrl, Alt và kéo</text>
</g>

<!-- taskbar -->
<rect y="546" width="1024" height="30" fill="url(#tb)"/>
<rect x="368" y="546" width="36" height="30" fill="#3a3a3a"/>
<path d="M12 557l5-.7v5h-5zM18 556.100l7-1v6.100h-7zM12 562.500h5v5l-5-.7zM18 562.500h7v6.200l-7-1z" fill="#fff"/>
<path d="M48 555h10v2M48 555v2M49 559h8v6h-8zM48 568h10v-2M48 568v-2" fill="none" stroke="#ddd" stroke-width="1"/><path d="M60 556v2M60 560v2M60 564v2" stroke="#ddd"/>
<path d="M84 558h16v14h-16z" fill="#fff"/><path d="M88 558c0-6 8-6 8 0" fill="none" stroke="#ddd"/>
<rect x="88" y="561" width="3.500" height="3.500" fill="#e53"/><rect x="92.500" y="561" width="3.500" height="3.500" fill="#6b2"/><rect x="88" y="565.500" width="3.500" height="3.500" fill="#29e"/><rect x="92.500" y="565.500" width="3.500" height="3.500" fill="#fb0"/>
<path d="M120 557l9-3 9 3-9 5zM120 560v9h18v-9l-9 6z" fill="#fff"/>
<path d="M160 561h12c0-5-3-7-6-7-4 0-7 4-7 8 0 5 4 8 7 8 3 0 5-1 6-2" fill="none" stroke="#1479d4" stroke-width="3.200"/>
<path d="M195 555h6l2 2h11v3h-19z" fill="#f1c240"/><path d="M195 560h19v11h-19z" fill="#f3d468"/><path d="M199 563h11v8h-11z" fill="#45a7d8"/><rect x="202" y="565" width="5" height="3" fill="#f3d468"/>
<ellipse cx="239" cy="561" rx="8" ry="8.500" fill="none" stroke="#d81019" stroke-width="3.500"/>
<circle cx="276" cy="561" r="8.500" fill="#8bb13f"/><circle cx="275" cy="562" r="4" fill="#eee"/><circle cx="275" cy="562" r="1.800" fill="#6a9b32"/><path d="M278 555l5-3" stroke="#e8a020" stroke-width="2"/>
<circle cx="312" cy="561" r="8.500" fill="#e2c026"/><path d="M312 552.500a8.500 8.500 0 0 1 7.400 4.300h-7.400a4.200 4.200 0 0 0-3.900 2.600l-3.300-5.500a8.500 8.500 0 0 1 7.200-1.400z" fill="#d9382c"/><path d="M303.700 558a8.500 8.500 0 0 0 6.300 11.300l3.700-6.400a4.200 4.200 0 0 1-4.800-1.400z" fill="#3a9a3e"/><circle cx="312" cy="561" r="4.200" fill="#fff"/><circle cx="312" cy="561" r="3" fill="#3d82de"/>
<rect x="341" y="555" width="17" height="13" rx="1" fill="#fff"/><path d="M345 555l1.500-2h6l1.500 2z" fill="#fff"/><circle cx="349.500" cy="561.500" r="3.800" fill="#222"/><circle cx="349.500" cy="561.500" r="1.500" fill="#888"/>
<rect x="377" y="552" width="18" height="18" rx="4" fill="#eeeeee"/><circle cx="386" cy="561" r="6" fill="#35b3a0"/><path d="M386 555a6 6 0 0 1 6 6h-6z" fill="#e8503e"/><path d="M380 561a6 6 0 0 1 6-6v6z" fill="#f2a33c"/><circle cx="387" cy="563" r="2.500" fill="#9fdde0"/>
<rect x="261" y="574" width="30" height="2" fill="#75aecb"/><rect x="334" y="574" width="30" height="2" fill="#75aecb"/><rect x="368" y="574" width="36" height="2" fill="#75aecb"/>

<!-- tray -->
<circle cx="820" cy="559" r="2" fill="none" stroke="#ddd"/><circle cx="815" cy="562" r="2" fill="none" stroke="#ddd"/><path d="M811 568c0-3 6-4 7 0M817 564c2-1 6 0 6 3" fill="none" stroke="#ddd"/>
<path d="M842 565l4-4 4 4" fill="none" stroke="#ddd" stroke-width="1.200"/>
<rect x="859" y="556" width="12" height="12" fill="#f3d8d8"/><text x="865" y="566" class="c" style="font-size:11px;font-weight:bold;fill:#c8202a">V</text>
<path d="M878 556h14v9h-14zM885 565v3M881 568h8" fill="none" stroke="#ddd"/><rect x="876" y="554" width="5" height="5" fill="#111" stroke="#ddd"/>
<path d="M895 559h2l3-3v11l-3-3h-2z" fill="none" stroke="#ddd"/><path d="M902 559c1 1 1 4 0 5M905 558c1 2 1 5 0 7" fill="none" stroke="#888"/>
<text x="913" y="565" style="font-size:9.500px;fill:#ddd">ENG</text>
<text x="962" y="557" class="c" style="font-size:9.500px;fill:#e0e0e0">1:13 PM</text>
<text x="962" y="572" class="c" style="font-size:9.500px;fill:#e0e0e0">10/12/2021</text>
<path d="M994 556h14v10h-10l-4 3z" fill="#eee"/><path d="M996 559h10M996 562h10" stroke="#333"/>
<circle cx="1004" cy="566" r="5" fill="#333"/><text x="1004" y="569.500" class="c" style="font-size:8.500px;fill:#fff">3</text>
<rect x="1020" y="546" width="1" height="30" fill="#444"/>
</svg>
</body></html>
